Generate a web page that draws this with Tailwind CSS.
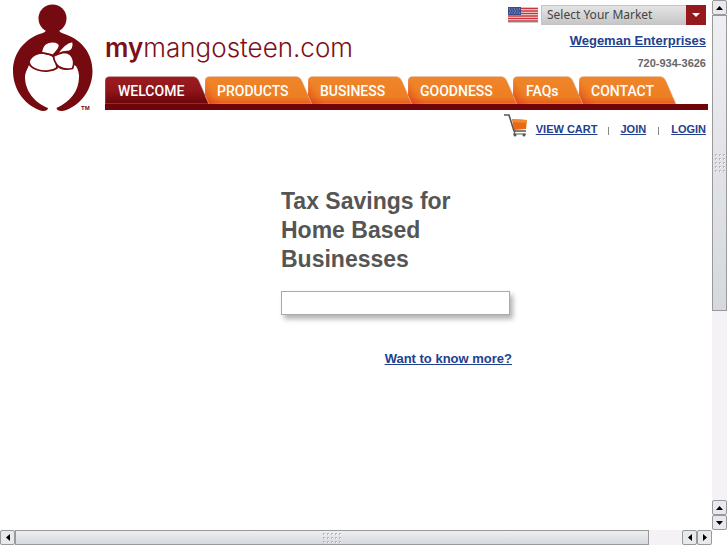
<!DOCTYPE html>
<html lang="en">
<head>
  <meta charset="UTF-8">
  <title>mymangosteen.com</title>
  <script src="https://cdn.jsdelivr.net/npm/@tailwindcss/browser@4"></script>
</head>
<body class="bg-white h-screen overflow-hidden flex flex-col font-['Liberation_Sans',sans-serif]">

  <!-- Shared gradients and scrollbar grip -->
  <svg class="absolute w-0 h-0" aria-hidden="true">
    <defs>
      <linearGradient id="orange" x1="0" y1="0" x2="0" y2="1">
        <stop offset="0" stop-color="#f0852a"/><stop offset=".75" stop-color="#ee7e22"/><stop offset="1" stop-color="#e65a1c"/>
      </linearGradient>
      <linearGradient id="shade" gradientUnits="userSpaceOnUse" x1="0" y1="24" x2="11" y2="16">
        <stop offset="0" stop-color="#dc3a16" stop-opacity=".75"/><stop offset="1" stop-color="#e65a1c" stop-opacity="0"/>
      </linearGradient>
      <linearGradient id="red" x1="0" y1="0" x2="0" y2="1">
        <stop offset="0" stop-color="#9c1c20"/><stop offset=".5" stop-color="#8f161a"/><stop offset="1" stop-color="#6c0508"/>
      </linearGradient>
      <pattern id="dots" width="4" height="4" patternUnits="userSpaceOnUse">
        <path d="M0 0h2v1H1v1H0z" fill="#b4b7bc"/><path d="M1 1h1v1H1z" fill="#fff"/>
      </pattern>
    </defs>
  </svg>

  <div class="flex flex-1 min-h-0">
    <div class="flex-1 min-w-0 overflow-hidden">

      <!-- Header -->
      <header class="flex pr-1">
        <a href="#" aria-label="Home" class="shrink-0 w-[105px]">
          <svg class="w-[105px] h-[115px]" viewBox="0 0 105 115">
            <circle cx="52.500" cy="18.500" r="14" fill="#750b10"/>
            <path d="M46 30h13c0 2 3 3 7 4.500C82 40 92.500 54 92.500 71c0 18-11 33-26 39-5 2-10 1-10-2C70 102 79 91 79 77c0-4-1-8-3-11H29c-2 3-4 7-4 11 0 14 10 26 23 31 0 3-5 4-9 2-15-6-26-21-26-39 0-17 10-30 25-36.500C43 33 46 32 46 30z" fill="#750b10"/>
            <path d="M29 65h46l4 12H25z" fill="#fff"/>
            <g fill="#fff" stroke="#750b10" stroke-width="1.800">
              <path d="M29 61.500C31 55 38 52.500 44 53c6 .5 10 2 11.500 7 1 3 1.500 5 1.500 8-4 3-13 4-19 2-5-1.500-9-4-9-8.500z"/>
              <path d="M53.500 56c5-4 13-5 17-1.500 4 4 4 10 2 14-6 1.500-13 .5-16-4-2-3-3-5-3-8.500z"/>
              <path d="M41 52.500c1-7 5-11 11-11 5 0 8.500 2 7.500 5-1 4-4 6-6.500 9-4-2-8-2-12-3z"/>
              <path d="M57 54.500c3-6 9-12 16-13.500 1.500 6-1 10-4 10.500-4 0-8 1-12 3z"/>
            </g>
            <text x="81" y="110" font-family="Liberation Sans" font-size="6" font-weight="bold" fill="#750b10">TM</text>
          </svg>
        </a>

        <div class="flex-1 min-w-0">
          <div class="flex justify-between h-[76px]">
            <div class="pt-8 text-[26px] leading-8 font-light text-[#7d1016] font-['Inter',sans-serif] whitespace-nowrap"><b class="font-semibold">my</b>mangosteen.com</div>
            <div class="flex flex-col items-end pt-[5px] pr-0.5">
              <div class="flex gap-[3px] items-start">
                <svg class="w-[30px] h-[16px] mt-0.5" viewBox="0 0 30 16">
                  <path d="M0 0h30v15H0z" fill="#f6e9e9"/>
                  <path d="M0 1.500h30M0 4h30M0 6.500h30M0 9h30M0 11.500h30M0 14h30" stroke="#c9353b" stroke-width="1.300"/>
                  <path d="M0 0h13v8H0z" fill="#3b4e8c"/>
                  <path d="M1 2h11M2 4h9M1 6h11" stroke="#b9c2dd" stroke-width=".8" stroke-dasharray="1 1.500"/>
                  <path d="M0 15.500h30" stroke="#c9c9c9"/>
                </svg>
                <div class="relative flex">
                  <select aria-label="Select Your Market" class="appearance-none w-[165px] h-5 pl-[5px] pr-5 bg-linear-to-b from-[#e4e4e4] to-[#c6c6c6] border border-[#c4c4c4] text-[12px] leading-[18px] text-[#444] font-['Noto_Sans',sans-serif]">
                    <option>Select Your Market</option>
                  </select>
                  <span class="absolute right-0 top-0 w-5 h-5 bg-[#951a1e] pointer-events-none flex items-center justify-center">
                    <svg class="w-[8px] h-[4px]" viewBox="0 0 8 4"><path d="M0 0h8L4 4z" fill="#fff"/></svg>
                  </span>
                </div>
              </div>
              <a href="#" class="mt-2 text-[13px] leading-4 font-bold text-[#23408f] underline">Wegeman Enterprises</a>
              <div class="mt-1.5 text-[11px] leading-4 font-bold text-[#666]">720-934-3626</div>
            </div>
          </div>

          <!-- Tabs -->
          <nav class="flex border-b-6 border-[#6f0509] text-white text-[14px] leading-[30px] font-medium font-['Roboto',sans-serif]">
            <a href="#" class="relative w-[100px] h-7 pl-[13px]">
              <svg class="absolute left-0 top-0 w-[108px] h-7" viewBox="0 0 108 28"><path d="M0 28V5Q0 .5 5 .5H88Q92 .5 94 5L104 28z" fill="url(#red)" stroke="#c9b9bb" stroke-width=".5"/></svg>
              <span class="relative">WELCOME</span>
            </a>
            <a href="#" class="relative w-[103px] h-7 pl-3">
              <svg class="absolute left-0 top-0 w-[108px] h-7" viewBox="0 0 108 28"><path d="M4 28L0 19V5Q0 .5 5 .5H91Q95 .5 97 5L107 28z" fill="url(#orange)" stroke="#d8c8c0" stroke-width=".5"/><path d="M4 28L0 19V5Q0 .5 5 .5H16V28z" fill="url(#shade)"/></svg>
              <span class="relative">PRODUCTS</span>
            </a>
            <a href="#" class="relative w-[100px] h-7 pl-3">
              <svg class="absolute left-0 top-0 w-[108px] h-7" viewBox="0 0 108 28"><path d="M4 28L0 19V5Q0 .5 5 .5H88Q92 .5 94 5L104 28z" fill="url(#orange)" stroke="#d8c8c0" stroke-width=".5"/><path d="M4 28L0 19V5Q0 .5 5 .5H16V28z" fill="url(#shade)"/></svg>
              <span class="relative">BUSINESS</span>
            </a>
            <a href="#" class="relative w-[105px] h-7 pl-3">
              <svg class="absolute left-0 top-0 w-[110px] h-7" viewBox="0 0 110 28"><path d="M4 28L0 19V5Q0 .5 5 .5H93Q97 .5 99 5L109 28z" fill="url(#orange)" stroke="#d8c8c0" stroke-width=".5"/><path d="M4 28L0 19V5Q0 .5 5 .5H16V28z" fill="url(#shade)"/></svg>
              <span class="relative">GOODNESS</span>
            </a>
            <a href="#" class="relative w-[66px] h-7 pl-[13px]">
              <svg class="absolute left-0 top-0 w-[72px] h-7" viewBox="0 0 72 28"><path d="M4 28L0 19V5Q0 .5 5 .5H54Q58 .5 60 5L70 28z" fill="url(#orange)" stroke="#d8c8c0" stroke-width=".5"/><path d="M4 28L0 19V5Q0 .5 5 .5H16V28z" fill="url(#shade)"/></svg>
              <span class="relative">FAQs</span>
            </a>
            <a href="#" class="relative w-[98px] h-7 pl-3">
              <svg class="absolute left-0 top-0 w-[98px] h-7" viewBox="0 0 98 28"><path d="M4 28L0 19V5Q0 .5 5 .5H81Q85 .5 87 5L97 28z" fill="url(#orange)" stroke="#d8c8c0" stroke-width=".5"/><path d="M4 28L0 19V5Q0 .5 5 .5H16V28z" fill="url(#shade)"/></svg>
              <span class="relative">CONTACT</span>
            </a>
          </nav>
        </div>
      </header>

      <!-- Account links -->
      <div class="flex justify-end items-center pr-1.5 h-7 text-[11px] font-bold text-[#23408f]">
        <svg class="w-6 h-6 mr-2 -mt-2" viewBox="0 0 24 24">
          <path d="M8 6l15 1-1 9-12 1z" fill="#ea6a14"/>
          <path d="M8 6l15 1v3L9 9z" fill="#f28a35"/>
          <path d="M0 2h5l5 16h12" fill="none" stroke="#5c5552" stroke-width="1.600"/>
          <path d="M11 18l-1 3h12" fill="none" stroke="#5c5552" stroke-width="1.200"/>
          <circle cx="11" cy="22" r="1.500" fill="#5c5552"/><circle cx="20" cy="22" r="1.500" fill="#5c5552"/>
        </svg>
        <a href="#" class="underline">VIEW CART</a>
        <span class="w-px h-2 mx-[11px] mt-1 bg-[#888]"></span>
        <a href="#" class="underline">JOIN</a>
        <span class="w-px h-2 mx-3 mt-1 bg-[#888]"></span>
        <a href="#" class="underline">LOGIN</a>
      </div>

      <!-- Content -->
      <main class="pl-[281px] pt-11">
        <div class="w-[231px] flex flex-col">
          <h1 class="text-[23px] leading-[29px] font-bold text-[#555]">Tax Savings for Home Based Businesses</h1>
          <input type="text" aria-label="Search" class="mt-[17px] w-[229px] h-6 px-2 text-[13px] bg-white border border-[#aaa] shadow-[3px_4px_5px_rgba(0,0,0,0.3)] outline-none">
          <a href="#" class="mt-9 self-end text-[13px] leading-4 font-bold text-[#23408f] underline">Want to know more?</a>
        </div>
      </main>
    </div>

    <!-- Vertical scrollbar -->
    <div class="w-[15px] shrink-0 flex flex-col bg-[#f4f2f4]">
      <button aria-label="Scroll up" class="h-[15px] shrink-0 border border-[#999] rounded-xs bg-[#e8e9ec] flex items-center justify-center">
        <svg class="w-[7px] h-[4px]" viewBox="0 0 7 4"><path d="M0 4L3.500 0 7 4z"/></svg>
      </button>
      <div class="flex-1">
        <div class="h-[61%] border border-[#999] bg-linear-to-b from-[#eeeff3] to-[#d5d8dd] flex items-center justify-center">
          <svg class="w-[10px] h-[18px]"><rect width="10" height="18" fill="url(#dots)"/></svg>
        </div>
      </div>
      <button aria-label="Scroll up" class="h-[15px] shrink-0 border border-[#999] rounded-xs bg-[#e8e9ec] flex items-center justify-center">
        <svg class="w-[7px] h-[4px]" viewBox="0 0 7 4"><path d="M0 4L3.500 0 7 4z"/></svg>
      </button>
      <button aria-label="Scroll down" class="h-[15px] shrink-0 border border-[#999] rounded-xs bg-[#e8e9ec] flex items-center justify-center">
        <svg class="w-[7px] h-[4px]" viewBox="0 0 7 4"><path d="M0 0h7L3.500 4z"/></svg>
      </button>
    </div>
  </div>

  <!-- Horizontal scrollbar -->
  <div class="h-[15px] shrink-0 flex mr-[15px] bg-[#f4f2f4]">
    <button aria-label="Scroll left" class="w-[15px] shrink-0 border border-[#999] rounded-xs bg-[#e8e9ec] flex items-center justify-center">
      <svg class="w-[4px] h-[7px]" viewBox="0 0 4 7"><path d="M4 0v7L0 3.500z"/></svg>
    </button>
    <div class="flex-1 flex">
      <div class="w-[95%] border border-[#999] bg-linear-to-b from-[#eeeff3] to-[#d5d8dd] flex items-center justify-center">
        <svg class="w-[18px] h-[10px]"><rect width="18" height="10" fill="url(#dots)"/></svg>
      </div>
    </div>
    <button aria-label="Scroll left" class="w-[15px] shrink-0 border border-[#999] rounded-xs bg-[#e8e9ec] flex items-center justify-center">
      <svg class="w-[4px] h-[7px]" viewBox="0 0 4 7"><path d="M4 0v7L0 3.500z"/></svg>
    </button>
    <button aria-label="Scroll right" class="w-[15px] shrink-0 border border-[#999] rounded-xs bg-[#e8e9ec] flex items-center justify-center">
      <svg class="w-[4px] h-[7px]" viewBox="0 0 4 7"><path d="M0 0v7L4 3.500z"/></svg>
    </button>
  </div>

</body>
</html>
